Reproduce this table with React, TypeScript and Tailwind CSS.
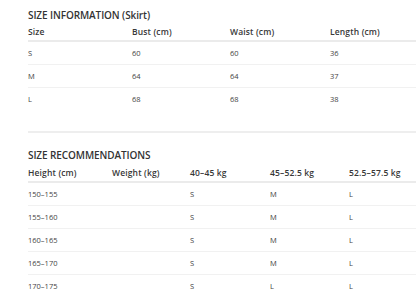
import React from "react"

const sizeRows = [
  ["S", "60", "60", "36"],
  ["M", "64", "64", "37"],
  ["L", "68", "68", "38"],
]

const recRows = [
  ["150–155", "", "S", "M", "L"],
  ["155–160", "", "S", "M", "L"],
  ["160–165", "", "S", "M", "L"],
  ["165–170", "", "S", "M", "L"],
  ["170–175", "", "S", "L", "L"],
]

const SizeTable = ({
  head,
  rows,
  cols,
  headClass,
}: {
  head: string[]
  rows: string[][]
  cols: string
  headClass: string
}) => (
  <div className="w-[400px]">
    <div className={`grid ${cols} items-center border-b-2 border-[#ebebeb] ${headClass}`}>
      {head.map((h, i) => (
        <div key={i} className="text-[8.5px] leading-[12px] font-semibold tracking-[0.15px] text-[#383838] whitespace-nowrap">
          {h}
        </div>
      ))}
    </div>
    {rows.map((r, i) => (
      <div
        key={i}
        className={
          i < rows.length - 1
            ? `grid ${cols} items-center h-[23px] border-b border-[#f1f1f1]`
            : `grid ${cols} items-center h-[22px]`
        }
      >
        {r.map((c, j) => (
          <div key={j} className="text-[7.5px] leading-[10px] text-[#444] whitespace-nowrap">
            {c}
          </div>
        ))}
      </div>
    ))}
  </div>
)

export default function App() {
  return (
    <div
      className="w-[416px] h-[307px] overflow-hidden bg-white pl-[28px] pt-[8px]"
      style={{ fontFamily: '"Open Sans", "Noto Sans", sans-serif' }}
    >
      <div className="h-[14px] text-[10px] leading-[14px] font-semibold text-[#333] tracking-[-0.1px] whitespace-nowrap">
        SIZE INFORMATION (Skirt)
      </div>
      <SizeTable
        head={["Size", "Bust (cm)", "Waist (cm)", "Length (cm)"]}
        rows={sizeRows}
        cols="grid-cols-[104px_98px_100px_98px]"
        headClass="mt-[2px] h-[18px]"
      />
      <div className="mt-[21px] h-[2px] w-[400px] bg-[#eeeeee]" />
      <div className="mt-[15px] h-[14px] text-[10px] leading-[14px] font-semibold text-[#333] tracking-[-0.1px] whitespace-nowrap">
        SIZE RECOMMENDATIONS
      </div>
      <SizeTable
        head={["Height (cm)", "Weight (kg)", "40–45 kg", "45–52.5 kg", "52.5–57.5 kg"]}
        rows={recRows}
        cols="grid-cols-[84px_78px_80px_79px_79px]"
        headClass="mt-[3px] h-[18px]"
      />
    </div>
  )
}
